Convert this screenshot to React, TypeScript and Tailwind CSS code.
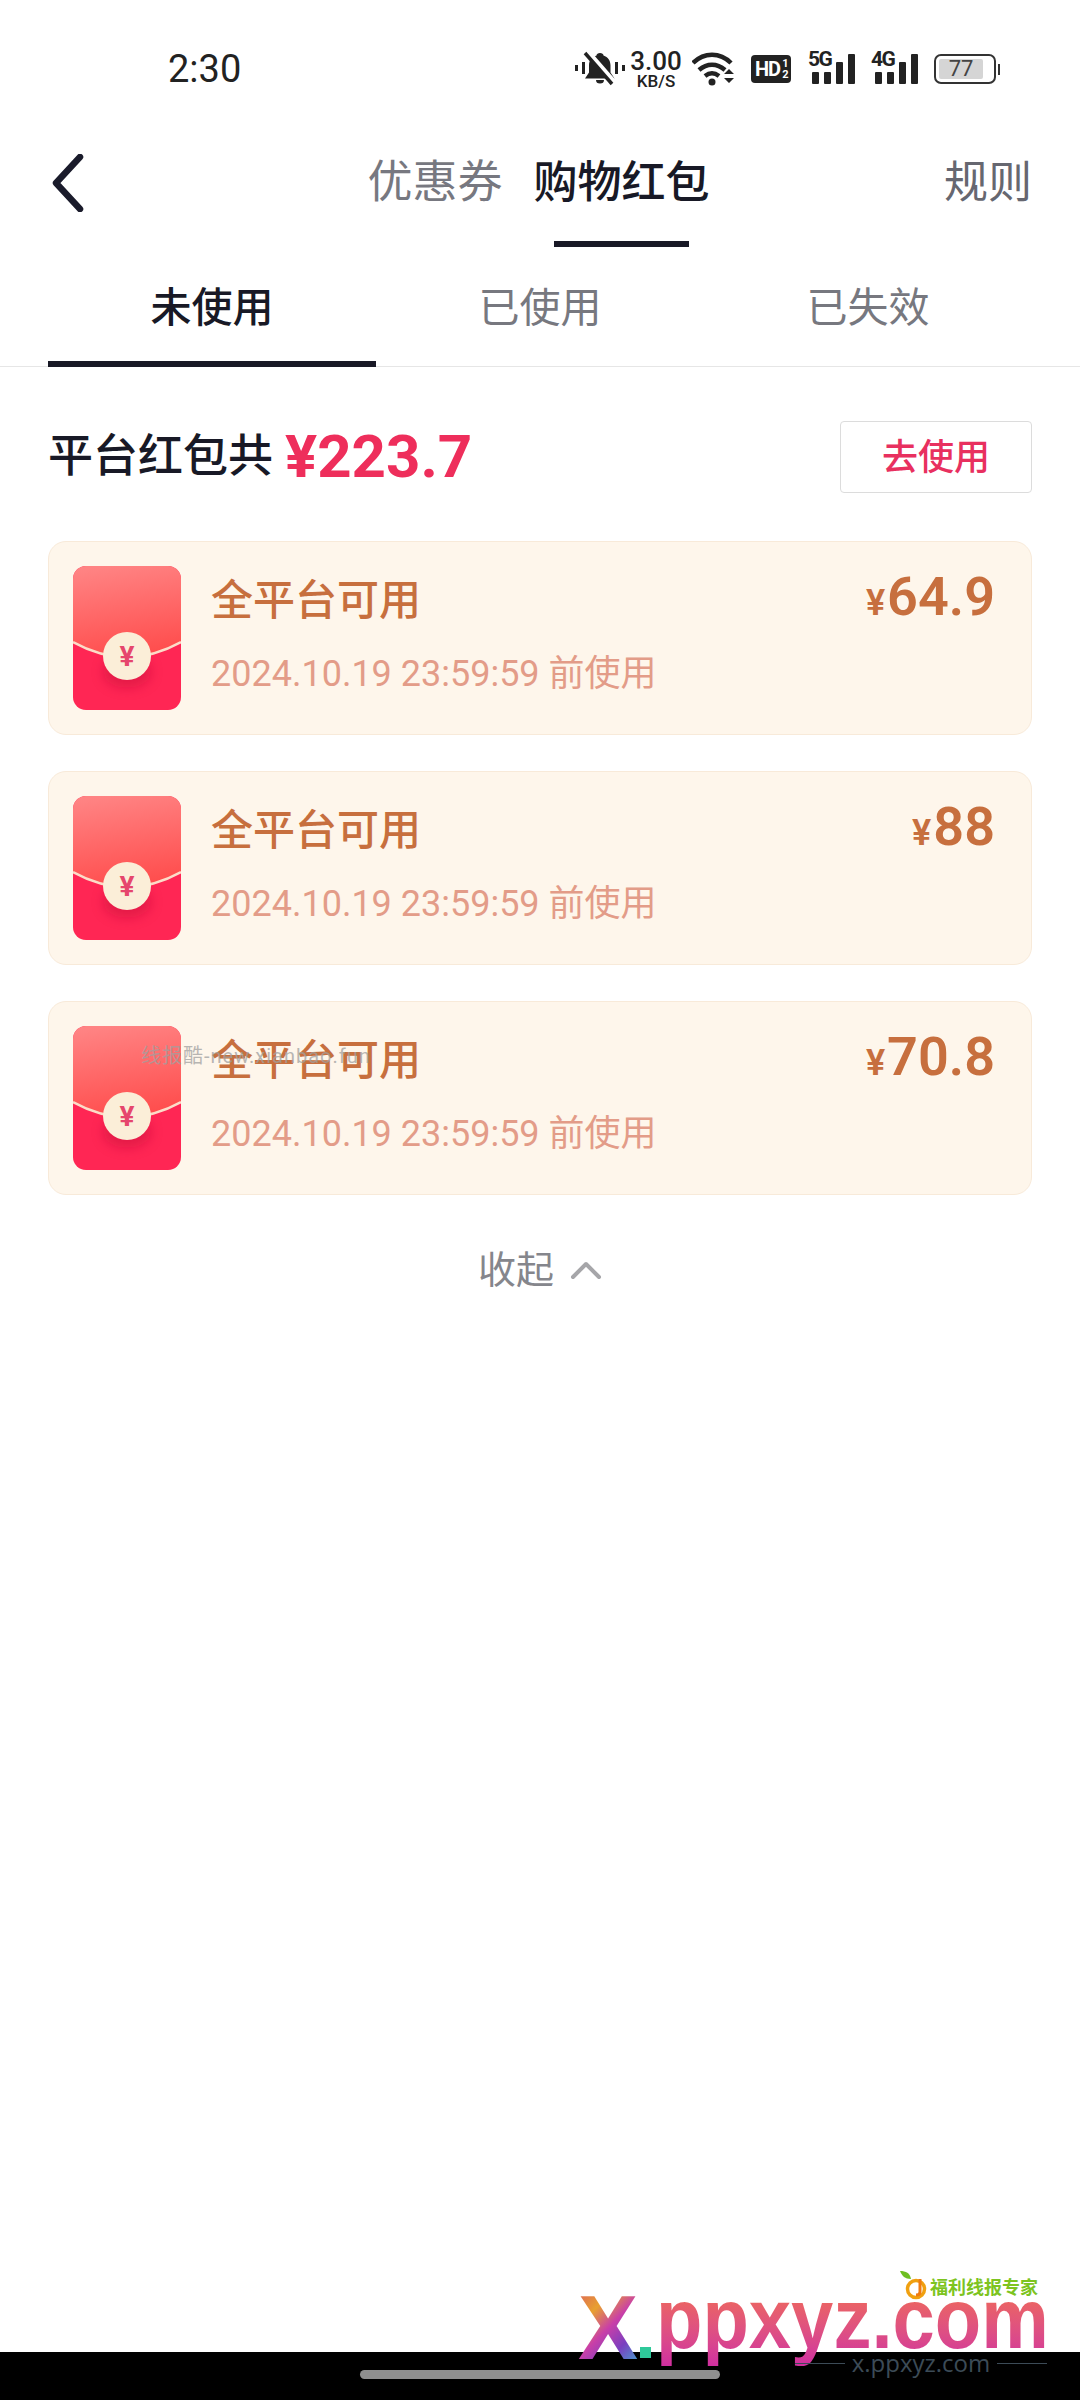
import React from "react";

const cjk = "font-['Roboto','Noto_Sans_CJK_SC',sans-serif]";

function Bell() {
  return (
    <svg width="50" height="36" viewBox="0 0 50 36" className="text-[#222]">
      <rect x="0" y="14" width="3" height="6" fill="currentColor" />
      <rect x="7" y="11" width="3" height="12" fill="currentColor" />
      <rect x="40" y="11" width="3" height="12" fill="currentColor" />
      <rect x="47" y="14" width="3" height="6" fill="currentColor" />
      <path d="M25 2c2 0 3.500 1 3.500 2.500 4.500 1.500 7 5 7 10v7l4 6H10l4-6v-7c0-5 2.500-8.500 7.500-10C21.500 3 23 2 25 2z" fill="currentColor" />
      <path d="M21 29h8a4 3.500 0 0 1-8 0z" fill="currentColor" />
      <path d="M13 1l26 30" stroke="#fff" strokeWidth="5" />
      <path d="M10 2l27 31" stroke="currentColor" strokeWidth="3.500" />
    </svg>
  );
}

function Wifi() {
  return (
    <svg width="44" height="34" viewBox="0 0 44 34" fill="none" stroke="#222" strokeWidth="4.500">
      <path d="M1 11C12 0 28 0 39 11" />
      <path d="M7 18c8-7 18-7 26 0" />
      <path d="M13 24c4.500-3.500 9.500-3.500 14 0" />
      <circle cx="20" cy="30" r="3.500" fill="#222" stroke="none" />
      <path d="M32 22l5-5 5 5zM32 26l5 5 5-5z" fill="#222" stroke="none" />
    </svg>
  );
}

function HD() {
  return (
    <div className="relative flex h-[28px] w-[40px] items-center rounded-[4px] bg-[#222] pl-[4px] font-['Roboto',sans-serif] text-[20px] leading-none font-bold tracking-[-1px] text-white">
      HD
      <span className="ml-[2px] flex flex-col text-center text-[11px] leading-[11px] font-bold">
        <span>1</span>
        <span>2</span>
      </span>
    </div>
  );
}

function Signal({ label }: { label: string }) {
  return (
    <div className="relative h-[32px] w-[48px]">
      <span className="absolute top-[-4px] left-0 font-['Roboto',sans-serif] text-[21px] leading-none font-bold tracking-[-1.5px] text-[#222]">{label}</span>
      <svg width="48" height="32" viewBox="0 0 48 32" fill="#222">
        <rect x="4" y="19" width="7" height="12" rx="1" />
        <rect x="16" y="19" width="7" height="12" rx="1" />
        <rect x="28" y="9" width="7" height="22" rx="1" />
        <rect x="40" y="1" width="7" height="30" rx="1" />
      </svg>
    </div>
  );
}

function Battery() {
  return (
    <div className="flex items-center">
      <div className="relative flex h-[30px] w-[62px] items-center rounded-[7px] border-2 border-[#333] p-[3px]">
        <div className="h-full w-[44px] rounded-[2px] bg-[#d5d5d5]" />
        <span className="absolute inset-x-0 top-0 left-[-8px] text-center font-['Roboto',sans-serif] text-[22px] leading-[26px] text-[#444]">77</span>
      </div>
      <div className="ml-[2px] h-[11px] w-[2px] bg-[#333]" />
    </div>
  );
}

function Packet({ id }: { id: string }) {
  return (
    <svg width="108" height="144" viewBox="0 0 108 144" className="shrink-0">
      <defs>
        <linearGradient id={`top${id}`} x1="0.3" y1="0" x2="0.5" y2="1">
          <stop offset="0" stopColor="#ff8383" />
          <stop offset="1" stopColor="#ff4d4d" />
        </linearGradient>
        <clipPath id={`clip${id}`}>
          <rect width="108" height="144" rx="13" />
        </clipPath>
        <filter id={`blur${id}`} x="-50%" y="-50%" width="200%" height="200%">
          <feGaussianBlur stdDeviation="6" />
        </filter>
      </defs>
      <g clipPath={`url(#clip${id})`}>
        <rect width="108" height="144" fill="#ff2654" />
        <path d="M0 76Q54 106 108 76V0H0z" fill={`url(#top${id})`} />
        <path d="M0 76Q54 106 108 76" fill="none" stroke="#fcdcc8" strokeWidth="2.500" />
        <ellipse cx="54" cy="106" rx="24" ry="16" fill="#c9083a" opacity="0.5" filter={`url(#blur${id})`} />
        <circle cx="54" cy="90" r="24" fill="#fbeed8" />
        <text x="54" y="100" textAnchor="middle" fontSize="28" fontWeight="700" fill="#e6466c" fontFamily="Roboto, 'Noto Sans CJK SC', sans-serif">¥</text>
      </g>
    </svg>
  );
}

function Card({ amount, id }: { amount: string; id: string }) {
  return (
    <div className="flex h-[194px] items-start rounded-[18px] border border-[#f8ead9] bg-[#fef6eb] pt-[24px] pr-[36px] pl-[24px]">
      <Packet id={id} />
      <div className="ml-[30px] flex min-w-0 flex-1 flex-col">
        <div className="flex items-start justify-between">
          <span className="mt-[8px] text-[42px] leading-[54px] font-medium text-[#c76f3e]">全平台可用</span>
          <span className="mt-[4px] flex items-baseline text-[#c76f3e]">
            <span className="text-[36px] leading-[54px] font-semibold">¥</span>
            <span className="ml-[2px] text-[54px] leading-[54px] font-semibold">{amount}</span>
          </span>
        </div>
        <span className="mt-[20px] text-[36px] leading-[48px] text-[#e39c88]">2024.10.19 23:59:59 前使用</span>
      </div>
    </div>
  );
}

export default function App() {
  return (
    <div className={`relative flex min-h-[2400px] w-[1080px] flex-col overflow-hidden bg-white ${cjk}`}>
      <div className="flex h-[120px] items-start justify-between pt-[49px] pr-[80px] pl-[168px]">
        <span className="text-[38px] leading-[40px] text-[#222]">2:30</span>
        <div className="flex items-center">
          <Bell />
          <div className="ml-[5px] flex w-[52px] flex-col items-center text-[#222]">
            <span className="text-[26px] leading-[24px] font-medium">3.00</span>
            <span className="text-[17px] leading-[16px] font-medium">KB/S</span>
          </div>
          <div className="ml-[10px]"><Wifi /></div>
          <div className="ml-[15px]"><HD /></div>
          <div className="ml-[17px]"><Signal label="5G" /></div>
          <div className="ml-[15px]"><Signal label="4G" /></div>
          <div className="ml-[15px]"><Battery /></div>
        </div>
      </div>

      <div className="grid h-[127px] grid-cols-[1fr_auto_1fr] px-[48px]">
        <div className="pt-[34px]">
          <svg width="36" height="58" viewBox="0 0 36 58" fill="none" stroke="#1a1b2b" strokeWidth="6.500" strokeLinecap="round" strokeLinejoin="round">
            <path d="M32 3L8 29l24 26" />
          </svg>
        </div>
        <div className="flex items-start gap-[31px] pr-[3px]">
          <span className="pt-[30px] text-[45px] leading-[66px] text-[#777880]">优惠券</span>
          <div className="flex flex-col items-center">
            <span className="pt-[30px] text-[44px] leading-[66px] font-medium text-[#181926]">购物红包</span>
            <div className="mt-[25px] h-[6px] w-[135px] bg-[#181926]" />
          </div>
        </div>
        <div className="pt-[30px] text-right text-[44px] leading-[66px] text-[#666770]">规则</div>
      </div>

      <div className="grid h-[120px] grid-cols-3 border-b border-[#e6e6e6] px-[48px]">
        <div className="relative flex justify-center pt-[31px] text-[41px] leading-[60px] font-medium text-[#181926]">
          未使用
          <div className="absolute inset-x-0 bottom-[-1px] h-[6px] bg-[#181926]" />
        </div>
        <div className="flex justify-center pt-[31px] text-[41px] leading-[60px] text-[#77787f]">已使用</div>
        <div className="flex justify-center pt-[31px] text-[41px] leading-[60px] text-[#77787f]">已失效</div>
      </div>

      <div className="flex items-center justify-between px-[48px] pt-[54px]">
        <div className="flex items-center">
          <span className="text-[45px] leading-[72px] font-medium text-[#181926]">平台红包共</span>
          <span className="ml-[12px] text-[60px] leading-[72px] font-bold text-[#ee2e5b]">¥223.7</span>
        </div>
        <div className="flex h-[72px] w-[192px] items-center justify-center rounded-[4px] border border-[#dcdcdc] pt-[2px] text-[36px] font-medium text-[#e8305f]">去使用</div>
      </div>

      <div className="mt-[48px] flex flex-col gap-[36px] px-[48px]">
        <Card amount="64.9" id="a" />
        <Card amount="88" id="b" />
        <Card amount="70.8" id="c" />
      </div>

      <div className="mt-[47px] flex items-center justify-center">
        <span className="text-[38px] leading-[56px] text-[#85868c]">收起</span>
        <svg width="32" height="20" viewBox="0 0 32 20" fill="none" stroke="#a6a6a9" strokeWidth="4" strokeLinecap="round" strokeLinejoin="round" className="ml-[16px]">
          <path d="M3 17L16 4l13 13" />
        </svg>
      </div>

      <div className="flex-1" />

      <div className="flex h-[48px] items-start justify-center bg-black pt-[18px]">
        <div className="h-[9px] w-[360px] rounded-full bg-[#8f8f8f]" />
      </div>

      {/* overlaid watermarks */}
      <div className="pointer-events-none absolute top-[1044px] left-[141px] text-[20px] leading-[24px] tracking-[1px] text-[#a0a0a0]/75">线报酷-new.xianbao.fun</div>

      <div className="pointer-events-none absolute top-[2270px] left-[900px] flex items-end">
        <svg width="28" height="30" viewBox="0 0 28 30">
          <path d="M0 1c6 0 10 2 11 8C5 9 2 6 0 1z" fill="#6fbf22" />
          <circle cx="16" cy="19" r="8.500" fill="none" stroke="#f0a010" strokeWidth="3.500" />
          <path d="M20 9v13c0 2-2 3-4 3" fill="none" stroke="#f07a10" strokeWidth="3" />
        </svg>
        <span className="ml-[2px] pb-[2px] text-[18px] leading-[20px] font-bold text-[#7dc41f]">福利线报专家</span>
      </div>

      <div className="pointer-events-none absolute top-[2278px] left-[578px] bg-[linear-gradient(135deg,#d9506a_0%,#e8a030_30%,#c93fa8_50%,#7a3fc0_70%,#2fd0d8_100%)] bg-clip-text font-['Liberation_Sans',sans-serif] text-[90px] leading-[100px] font-bold text-transparent">X</div>
      <div className="pointer-events-none absolute top-[2347px] left-[640px] h-[11px] w-[11px] bg-[#2fc99a]" />
      <div className="pointer-events-none absolute top-[2279px] left-[656px] origin-bottom scale-y-[1.12] bg-gradient-to-b from-[#f9752a] to-[#cf2aa2] bg-clip-text font-['Liberation_Sans',sans-serif] text-[76px] leading-[90px] font-bold text-transparent">ppxyz.com</div>

      <div className="pointer-events-none absolute top-[2347px] left-[795px] flex h-[32px] w-[252px] items-center justify-between">
        <div className="h-[1px] w-[50px] bg-[#3c4b57]" />
        <span className="font-['Open_Sans',sans-serif] text-[24px] leading-[32px] text-[#3c4b57]">x.ppxyz.com</span>
        <div className="h-[1px] w-[50px] bg-[#3c4b57]" />
      </div>
    </div>
  );
}
